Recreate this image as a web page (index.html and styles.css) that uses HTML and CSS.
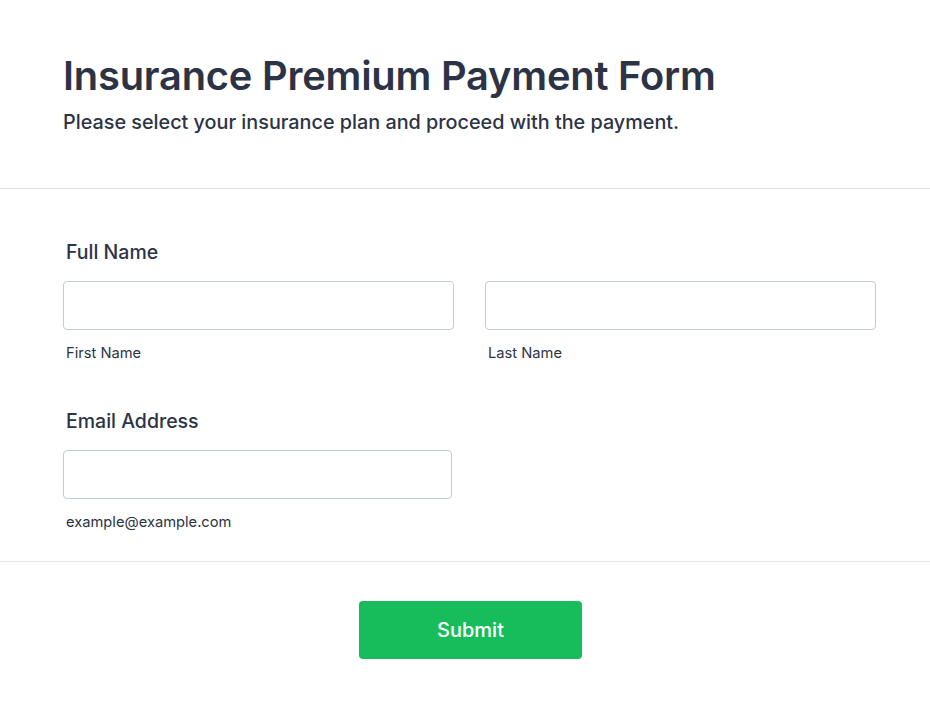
FILE: index.html
```html
<!DOCTYPE html>
<html lang="en">
<head>
    <meta charset="UTF-8">
    <meta name="viewport" content="width=device-width, initial-scale=1.0">
    <title>Insurance Premium Payment Form</title>
    <link rel="stylesheet" href="styles.css">
</head>
<body>
    <div class="form">
        <div class="form-header">
            <h1>Insurance Premium Payment Form</h1>
            <p class="subheader">Please select your insurance plan and proceed with the payment.</p>
        </div>

        <div class="form-body">
            <div class="field">
                <label class="field-label">Full Name</label>
                <div class="row">
                    <div class="col">
                        <input type="text" id="firstName">
                        <span class="sublabel">First Name</span>
                    </div>
                    <div class="col">
                        <input type="text" id="lastName">
                        <span class="sublabel">Last Name</span>
                    </div>
                </div>
            </div>

            <div class="field">
                <label class="field-label" for="email">Email Address</label>
                <div class="row">
                    <div class="col col-email">
                        <input type="email" id="email">
                        <span class="sublabel">example@example.com</span>
                    </div>
                    <div class="col"></div>
                </div>
            </div>
        </div>

        <div class="form-footer">
            <button type="submit">Submit</button>
        </div>
    </div>
</body>
</html>
```

FILE: styles.css
```css
body {
    font-family: Inter, "Noto Sans", sans-serif;
    background-color: #ffffff;
    color: #2c3345;
    margin: 0;
    padding: 0;
}
.form {
    width: 930px;
}
.form-header {
    padding: 51px 54px 53px 63px;
    border-bottom: 1px solid #dfe1ea;
}
h1 {
    font-size: 39.8px;
    font-weight: 600;
    line-height: 50px;
    margin: 0;
    letter-spacing: -0.2px;
}
.subheader {
    font-size: 19.8px;
    font-weight: 500;
    line-height: 26px;
    margin: 8px 0 0;
}
.form-body {
    padding: 50px 54px 30px 63px;
    border-bottom: 1px solid #e6e8ee;
}
.field {
    margin-bottom: 46px;
}
.field:last-child {
    margin-bottom: 0;
}
.field-label {
    display: block;
    font-size: 19.5px;
    font-weight: 500;
    line-height: 26px;
    margin: 0 0 16px 3px;
}
.row {
    display: flex;
    gap: 31px;
}
.col {
    flex: 1;
}
.col-email {
    flex: 0 0 389px;
}
input {
    display: block;
    box-sizing: border-box;
    width: 100%;
    height: 49px;
    margin: 0;
    border: 1px solid #c3cad8;
    border-radius: 4px;
    background: #ffffff;
    font-family: inherit;
    font-size: 16px;
}
.sublabel {
    display: block;
    font-size: 14.7px;
    line-height: 18px;
    margin: 14px 0 0 3px;
    color: #2c3345;
}
.form-footer {
    padding: 39px 0 48px 11px;
    display: flex;
    justify-content: center;
}
button {
    width: 223px;
    height: 58px;
    border: none;
    border-radius: 4px;
    background: #18bd5b;
    color: #ffffff;
    font-family: inherit;
    font-size: 20px;
    font-weight: 500;
    cursor: pointer;
}
```
